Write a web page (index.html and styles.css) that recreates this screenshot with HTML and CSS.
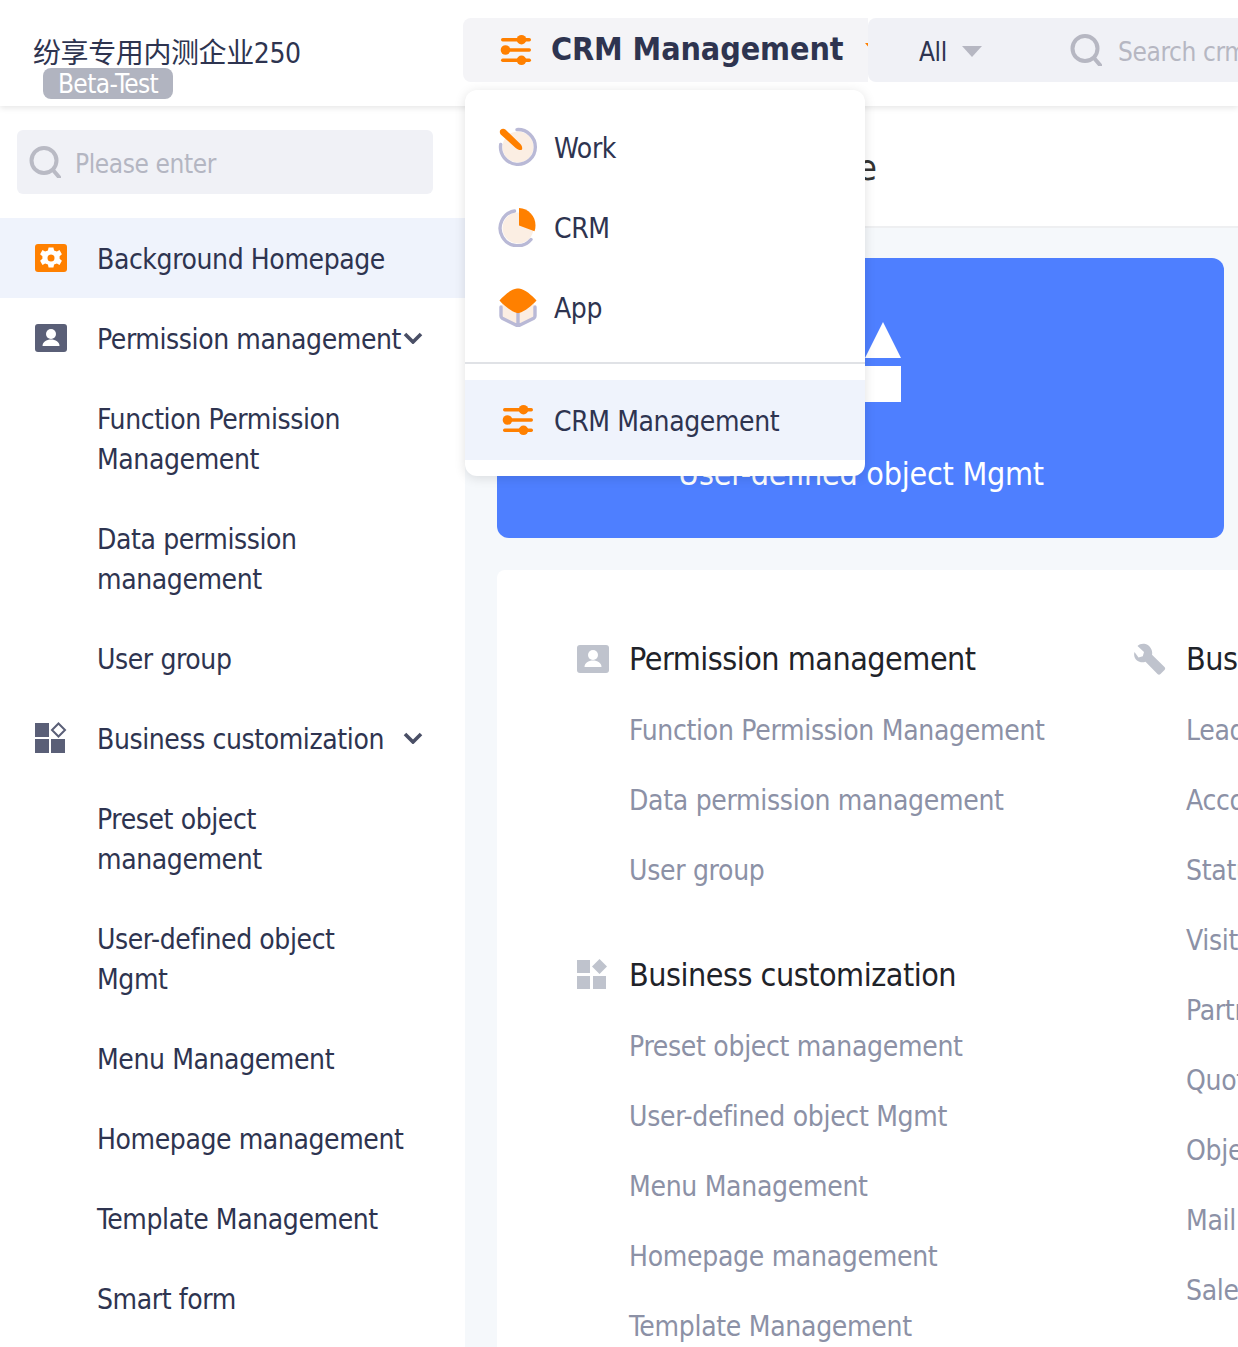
FILE: index.html
```html
<!DOCTYPE html>
<html lang="en">
<head>
    <meta charset="UTF-8">
    <title>Background Homepage</title>
    <link rel="stylesheet" href="styles.css">
</head>
<body>
    <header class="topbar">
        <div class="brand">
            <div class="brand-name">纷享专用内测企业250</div>
            <span class="brand-badge">Beta-Test</span>
        </div>
        <div class="app-tab">
            <svg class="tab-icon" viewBox="0 0 32 32"><use href="#sliders"/></svg>
            <span class="app-tab-name">CRM Management</span>
            <span class="app-tab-caret"></span>
        </div>
        <div class="scope-select">
            <span class="scope-text">All</span>
            <span class="scope-caret"></span>
        </div>
        <div class="top-search">
            <svg class="top-search-icon" viewBox="0 0 32 32"><circle cx="15" cy="14.5" r="12.5" fill="none" stroke="#b6b7c2" stroke-width="4"/><path d="M24 24l6 7" stroke="#b6b7c2" stroke-width="4" stroke-linecap="round"/></svg>
            <span class="top-search-text">Search crm</span>
        </div>
    </header>

    <!-- App switcher menu -->
    <div class="app-menu">
        <div class="app-menu-item">
            <svg class="app-icon" viewBox="0 0 40 40">
                <circle cx="20" cy="20" r="15.5" fill="#fbeee3"/>
                <path d="M19 2.600A17.400 17.400 0 1 1 2.700 17.500" fill="none" stroke="#b9b9d6" stroke-width="3.400" stroke-linecap="round"/>
                <path d="M2.400 3c1.400-1.600 3.600-1.800 5-.4l15 14.400c1.700 1.700 2.400 5 1.300 5.800-1 .8-4.300-.1-6-1.800L2.700 7.400C1.600 6.200 1.500 4.100 2.400 3z" fill="#ff8000"/>
            </svg>
            <span class="app-menu-text">Work</span>
        </div>
        <div class="app-menu-item">
            <svg class="app-icon" viewBox="0 0 40 40">
                <circle cx="20" cy="21" r="15.500" fill="#fbeee3"/>
                <path d="M16.500 4A17.500 17.500 0 1 0 33 32.500" fill="none" stroke="#b9b9d6" stroke-width="3.400" stroke-linecap="round"/>
                <path d="M21 1c9.500.5 16.500 8 16.500 17.500 0 2-.3 4-1 5.800L21 18.600z" fill="#ff8000"/>
            </svg>
            <span class="app-menu-text">CRM</span>
        </div>
        <div class="app-menu-item">
            <svg class="app-icon" viewBox="0 0 40 40">
                <path d="M4 16l16 8 16-8v14L20 38 4 30z" fill="#fbeee3"/>
                <path d="M3 20v9c0 1 .5 1.800 1.300 2.300L19 38.500c.7.300 1.300.300 2 0l14.700-7.200c.8-.5 1.300-1.300 1.300-2.300v-9M20 26v12" fill="none" stroke="#b9b9d6" stroke-width="3.400" stroke-linecap="round"/>
                <path d="M1.500 13.500C6 8.500 13 2 19 1.500c.7 0 1.300 0 2 0 6 .5 13 7 17.500 12-4.500 5-11.500 11-17.500 12.500-.7.200-1.300.200-2 0C13 24.500 6 18.500 1.500 13.500z" fill="#ff8000"/>
            </svg>
            <span class="app-menu-text">App</span>
        </div>
        <div class="app-menu-line"></div>
        <div class="app-menu-item active">
            <svg class="app-icon small" viewBox="0 0 32 32"><use href="#sliders"/></svg>
            <span class="app-menu-text">CRM Management</span>
        </div>
    </div>

    <div class="layout">
        <aside class="sidebar">
            <div class="side-search">
                <svg class="side-search-icon" viewBox="0 0 32 32"><circle cx="15" cy="14.500" r="12.500" fill="none" stroke="#b9bac4" stroke-width="4"/><path d="M24 24l6 7" stroke="#b9bac4" stroke-width="4" stroke-linecap="round"/></svg>
                <span class="side-search-text">Please enter</span>
            </div>
            <nav class="side-nav">
                <div class="nav-item active">
                    <svg class="nav-icon" viewBox="0 0 32 28">
                        <rect width="32" height="28" rx="3" fill="#ff8000"/>
                        <path d="M13.600 3.500h4.800l.7 2.900 2.800 1.200 2.600-1.500 2.400 4.100-2.300 2v2.600l2.300 2-2.400 4.100-2.600-1.500-2.800 1.200-.7 2.900h-4.800l-.7-2.900-2.800-1.200-2.600 1.500-2.400-4.100 2.300-2v-2.600l-2.300-2 2.400-4.100 2.600 1.500 2.800-1.200z" fill="#fff"/>
                        <circle cx="16" cy="14" r="3.500" fill="#ff8000"/>
                    </svg>
                    <span class="nav-text">Background Homepage</span>
                </div>
                <div class="nav-item">
                    <svg class="nav-icon" viewBox="0 0 32 28"><use href="#person" fill="#5a5f77"/></svg>
                    <span class="nav-text">Permission management</span>
                    <svg class="chevron" viewBox="0 0 20 12"><path d="M2 2l8 8 8-8" fill="none" stroke="#4a4f66" stroke-width="3.600"/></svg>
                </div>
                <div class="nav-item sub">Function Permission Management</div>
                <div class="nav-item sub">Data permission management</div>
                <div class="nav-item sub">User group</div>
                <div class="nav-item">
                    <svg class="nav-icon tall" viewBox="0 0 32 32">
                        <rect x="0" y="1" width="14" height="14" fill="#5a5f77"/>
                        <rect x="0" y="17" width="14" height="14" fill="#5a5f77"/>
                        <rect x="16" y="17" width="14" height="14" fill="#5a5f77"/>
                        <path d="M23.500 1.500l6.500 6.500-6.500 6.500L17 8z" fill="none" stroke="#5a5f77" stroke-width="2"/>
                    </svg>
                    <span class="nav-text">Business customization</span>
                    <svg class="chevron" viewBox="0 0 20 12"><path d="M2 2l8 8 8-8" fill="none" stroke="#4a4f66" stroke-width="3.600"/></svg>
                </div>
                <div class="nav-item sub">Preset object management</div>
                <div class="nav-item sub">User-defined object Mgmt</div>
                <div class="nav-item sub">Menu Management</div>
                <div class="nav-item sub">Homepage management</div>
                <div class="nav-item sub">Template Management</div>
                <div class="nav-item sub">Smart form</div>
            </nav>
        </aside>

        <main class="content">
            <div class="page-title">Background Homepage</div>
            <div class="content-body">
                <div class="hero">
                    <div class="hero-icon">
                        <span class="hero-shape"></span>
                        <span class="hero-triangle"></span>
                        <span class="hero-shape"></span>
                        <span class="hero-shape"></span>
                    </div>
                    <div class="hero-text">User-defined object Mgmt</div>
                </div>
                <div class="panel">
                    <div class="panel-col">
                        <section class="group">
                            <h2 class="group-title">
                                <svg class="group-icon" viewBox="0 0 32 28"><use href="#person" fill="#bfc3cd"/></svg>
                                Permission management
                            </h2>
                            <a class="group-link">Function Permission Management</a>
                            <a class="group-link">Data permission management</a>
                            <a class="group-link">User group</a>
                        </section>
                        <section class="group">
                            <h2 class="group-title">
                                <svg class="group-icon tall" viewBox="0 0 32 32">
                                    <rect x="0" y="1" width="13" height="13" fill="#bfc3cd"/>
                                    <rect x="0" y="17" width="13" height="13" fill="#bfc3cd"/>
                                    <rect x="16" y="17" width="13" height="13" fill="#bfc3cd"/>
                                    <path d="M22.500 0l7.500 7.500-7.500 7.500L15 7.500z" fill="#bfc3cd"/>
                                </svg>
                                Business customization
                            </h2>
                            <a class="group-link">Preset object management</a>
                            <a class="group-link">User-defined object Mgmt</a>
                            <a class="group-link">Menu Management</a>
                            <a class="group-link">Homepage management</a>
                            <a class="group-link">Template Management</a>
                        </section>
                    </div>
                    <div class="panel-col">
                        <section class="group">
                            <h2 class="group-title">
                                <svg class="group-icon tall" viewBox="0 0 32 32"><path d="M11.500 1C8.500.2 5.500 1 3.500 3l6.500 6-1.200 4.300-4.300 1.200L.5 9C-.5 12 .5 15.500 3 17.500c2.500 2 5.800 2.200 8.500 1.200L23.500 31c1 .9 2 .9 3 0l4-4c.9-1 .9-2 0-3L18 11.700C19 7 16 2.500 11.500 1z" fill="#bfc3cd"/></svg>
                                Business rules
                            </h2>
                            <a class="group-link">Leads</a>
                            <a class="group-link">Account</a>
                            <a class="group-link">Status</a>
                            <a class="group-link">Visit</a>
                            <a class="group-link">Partner</a>
                            <a class="group-link">Quote</a>
                            <a class="group-link">Object</a>
                            <a class="group-link">Mail</a>
                            <a class="group-link">Sales</a>
                        </section>
                    </div>
                </div>
            </div>
        </main>
    </div>

    <!-- shared icons -->
    <svg class="icon-defs" width="0" height="0">
        <defs>
            <g id="sliders" fill="#ff8000">
                <rect x="1" y="4" width="30" height="3.400" rx="1.700"/>
                <circle cx="21.500" cy="5.700" r="4.800"/>
                <rect x="1" y="14.300" width="30" height="3.400" rx="1.700"/>
                <circle cx="5.500" cy="16" r="4.800"/>
                <rect x="1" y="24.600" width="30" height="3.400" rx="1.700"/>
                <circle cx="21.500" cy="26.300" r="4.800"/>
            </g>
            <g id="person">
                <path d="M3 0h26a3 3 0 0 1 3 3v22a3 3 0 0 1-3 3H3a3 3 0 0 1-3-3V3a3 3 0 0 1 3-3z"/>
                <circle cx="16" cy="10" r="5" fill="#fff"/>
                <path d="M7.500 22c0-4 4-6.500 8.500-6.500s8.500 2.500 8.500 6.500z" fill="#fff"/>
            </g>
        </defs>
    </svg>
</body>
</html>
```

FILE: styles.css
```css
* {
    box-sizing: border-box;
}

html, body {
    margin: 0;
    height: 100%;
    overflow: hidden;
}

body {
    position: relative;
    font-family: "DejaVu Sans Condensed", "Noto Sans CJK SC", sans-serif;
    font-size: 28px;
    letter-spacing: -0.4px;
    color: #2e3450;
    background-color: #fff;
}

.icon-defs {
    position: absolute;
}

/* Top bar */
.topbar {
    position: relative;
    z-index: 2;
    display: flex;
    height: 106px;
    padding-top: 18px;
    background-color: #fff;
    box-shadow: 0 2px 6px rgba(0, 0, 0, 0.1);
}

.brand {
    flex: 0 0 463px;
    margin-top: 16px;
    padding-left: 33px;
}

.brand-name {
    line-height: 40px;
    white-space: nowrap;
}

.brand-badge {
    display: block;
    width: 130px;
    height: 31px;
    margin: -6px 0 0 10px;
    border-radius: 8px;
    background-color: #b1b4c0;
    color: #fff;
    font-size: 26px;
    letter-spacing: -0.6px;
    line-height: 32px;
    text-align: center;
}

.app-tab {
    display: flex;
    align-items: center;
    flex: 0 0 405px;
    height: 64px;
    padding-left: 37px;
    border-radius: 8px 0 0 8px;
    background-color: #f4f4f7;
    overflow: hidden;
}

.tab-icon {
    flex: none;
    width: 32px;
    height: 32px;
    margin-right: 19px;
}

.app-tab-name {
    flex: none;
    margin-top: -3px;
    font-size: 32px;
    font-weight: 700;
    letter-spacing: -0.1px;
    white-space: nowrap;
}

.app-tab-caret {
    flex: none;
    width: 0;
    height: 0;
    margin: -6px 0 0 21px;
    border-top: 9px solid #ff8000;
    border-left: 8px solid transparent;
    border-right: 8px solid transparent;
}

.scope-select {
    display: flex;
    align-items: center;
    flex: 0 0 166px;
    height: 64px;
    padding-left: 51px;
    border-radius: 8px 0 0 8px;
    background-color: #f0f1f6;
}

.scope-text {
    padding-top: 4px;
    font-size: 26px;
}

.scope-caret {
    width: 0;
    height: 0;
    margin: 3px 0 0 15px;
    border-top: 11px solid #b6b7c2;
    border-left: 10px solid transparent;
    border-right: 10px solid transparent;
}

.top-search {
    display: flex;
    align-items: center;
    flex: 1;
    min-width: 0;
    height: 64px;
    padding-left: 36px;
    background-color: #f0f1f6;
    overflow: hidden;
}

.top-search-icon {
    flex: none;
    width: 32px;
    height: 32px;
    margin-right: 16px;
}

.top-search-text {
    padding-top: 4px;
    color: #b6b7c2;
    font-size: 26px;
    white-space: nowrap;
}

/* App menu */
.app-menu {
    position: absolute;
    top: 90px;
    left: 465px;
    z-index: 3;
    width: 400px;
    height: 386px;
    padding: 17px 0 16px;
    border-radius: 12px;
    background-color: #fff;
    box-shadow: 0 2px 12px rgba(0, 0, 0, 0.12);
}

.app-menu-item {
    display: flex;
    align-items: center;
    height: 80px;
    padding-left: 33px;
}

.app-menu-item.active {
    background-color: #eff3fc;
}

.app-menu-text {
    padding-top: 2px;
}

.app-icon {
    flex: none;
    width: 40px;
    height: 40px;
    margin-right: 16px;
}

.app-icon.small {
    width: 32px;
    height: 32px;
    margin: 0 20px 0 4px;
}

.app-menu-line {
    height: 2px;
    margin: 15px 0 16px;
    background-color: #e0e2e6;
}

/* Sidebar */
.layout {
    display: flex;
    height: 1241px;
}

.sidebar {
    flex: none;
    width: 465px;
    padding-top: 24px;
    background-color: #fff;
    overflow: hidden;
}

.side-search {
    display: flex;
    align-items: center;
    width: 416px;
    height: 64px;
    margin-left: 17px;
    padding-left: 12px;
    border-radius: 6px;
    background-color: #f0f1f6;
}

.side-search-icon {
    flex: none;
    width: 32px;
    height: 32px;
    margin-right: 14px;
}

.side-search-text {
    padding-top: 4px;
    color: #b4b6c2;
    font-size: 26px;
}

.side-nav {
    margin-top: 24px;
}

.nav-item {
    display: flex;
    align-items: center;
    min-height: 80px;
    padding-left: 35px;
    line-height: 40px;
}

.nav-item.active {
    background-color: #eff3fc;
}

.nav-item.sub {
    width: 405px;
    padding: 22px 0 18px 97px;
}

.nav-icon {
    flex: none;
    width: 32px;
    height: 28px;
    margin-right: 30px;
}

.nav-icon.tall {
    height: 32px;
}

.nav-text {
    padding-top: 4px;
    white-space: nowrap;
}

.chevron {
    flex: none;
    width: 20px;
    height: 12px;
    margin-left: auto;
    margin-right: 42px;
}

/* Main content */
.content {
    flex: 1;
    min-width: 0;
    background-color: #f5f8fb;
}

.page-title {
    height: 122px;
    padding: 38px 0 0 32px;
    border-bottom: 2px solid #eeeff1;
    background-color: #fff;
    color: #333;
    font-size: 36px;
    letter-spacing: 0;
    line-height: 48px;
}

.content-body {
    padding: 30px 14px 0 32px;
}

.hero {
    display: flex;
    flex-direction: column;
    align-items: center;
    height: 280px;
    padding: 64px 0 0 1px;
    border-radius: 12px;
    background-color: #4e7fff;
    color: #fff;
}

.hero-icon {
    display: grid;
    grid-template-columns: 36px 36px;
    gap: 8px;
}

.hero-shape {
    width: 36px;
    height: 36px;
    background-color: #fff;
}

.hero-triangle {
    width: 0;
    height: 0;
    border-bottom: 36px solid #fff;
    border-left: 18px solid transparent;
    border-right: 18px solid transparent;
}

.hero-text {
    margin-top: 48px;
    font-size: 32px;
    letter-spacing: -0.25px;
    line-height: 48px;
    white-space: nowrap;
}

.panel {
    display: flex;
    width: 900px;
    margin-top: 32px;
    padding: 64px 0 0 80px;
    border-radius: 8px 8px 0 0;
    background-color: #fff;
}

.panel-col {
    flex: 0 0 557px;
}

.group {
    margin-bottom: 30px;
}

.group-title {
    display: flex;
    align-items: center;
    height: 50px;
    margin: 0 0 26px;
    color: #1f2329;
    font-size: 32px;
    font-weight: 400;
    letter-spacing: -0.5px;
    white-space: nowrap;
}

.group-icon {
    flex: none;
    width: 32px;
    height: 28px;
    margin-right: 20px;
}

.group-icon.tall {
    height: 32px;
}

.group-link {
    display: block;
    height: 70px;
    padding: 1px 0 0 52px;
    color: #8c91a6;
    line-height: 40px;
    letter-spacing: -0.3px;
    white-space: nowrap;
}
```
